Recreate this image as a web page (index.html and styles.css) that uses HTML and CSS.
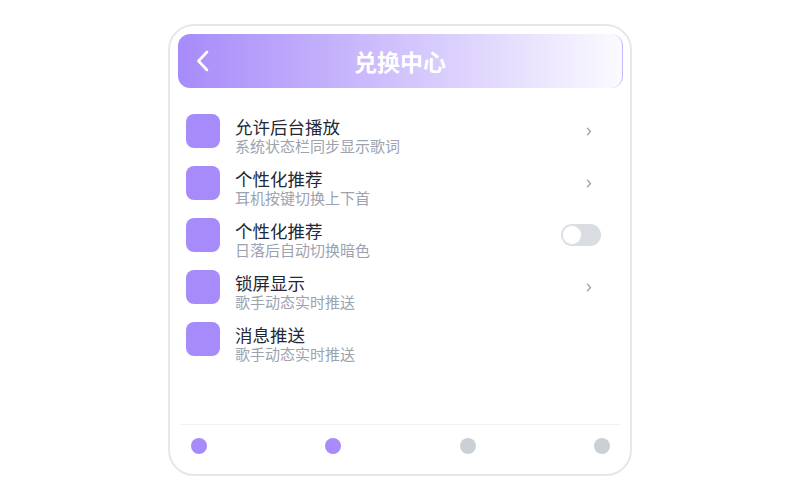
FILE: index.html
```html
<!DOCTYPE html>
<html>

<head>
    <title>兑换中心</title>
    <link rel="stylesheet" href="styles.css">
</head>

<body>
    <div class="phone">
        <header class="topbar">
            <span class="back">
                <svg width="14" height="22" viewBox="0 0 14 22">
                    <path d="M11 2 L2.5 11 L11 20" fill="none" stroke="#fff" stroke-width="2.6" stroke-linecap="round" stroke-linejoin="round" />
                </svg>
            </span>
            <h1 class="title">兑换中心</h1>
            <span></span>
        </header>

        <ul class="settings">
            <li class="row">
                <span class="thumb"></span>
                <div class="text">
                    <p class="name">允许后台播放</p>
                    <p class="desc">系统状态栏同步显示歌词</p>
                </div>
                <span class="chev">
                    <svg width="6" height="9" viewBox="0 0 6 9"><path d="M1.5 1.2 L4.5 4.5 L1.5 7.8" fill="none" stroke="#9ca3af" stroke-width="1.3" stroke-linecap="round" /></svg>
                </span>
            </li>
            <li class="row">
                <span class="thumb"></span>
                <div class="text">
                    <p class="name">个性化推荐</p>
                    <p class="desc">耳机按键切换上下首</p>
                </div>
                <span class="chev">
                    <svg width="6" height="9" viewBox="0 0 6 9"><path d="M1.5 1.2 L4.5 4.5 L1.5 7.8" fill="none" stroke="#9ca3af" stroke-width="1.3" stroke-linecap="round" /></svg>
                </span>
            </li>
            <li class="row">
                <span class="thumb"></span>
                <div class="text">
                    <p class="name">个性化推荐</p>
                    <p class="desc">日落后自动切换暗色</p>
                </div>
                <span class="switch"><span class="knob"></span></span>
            </li>
            <li class="row">
                <span class="thumb"></span>
                <div class="text">
                    <p class="name">锁屏显示</p>
                    <p class="desc">歌手动态实时推送</p>
                </div>
                <span class="chev">
                    <svg width="6" height="9" viewBox="0 0 6 9"><path d="M1.5 1.2 L4.5 4.5 L1.5 7.8" fill="none" stroke="#9ca3af" stroke-width="1.3" stroke-linecap="round" /></svg>
                </span>
            </li>
            <li class="row">
                <span class="thumb"></span>
                <div class="text">
                    <p class="name">消息推送</p>
                    <p class="desc">歌手动态实时推送</p>
                </div>
            </li>
        </ul>

        <nav class="tabs">
            <span class="dot on"></span>
            <span class="dot on"></span>
            <span class="dot"></span>
            <span class="dot"></span>
        </nav>
    </div>
</body>

</html>
```

FILE: styles.css
```css
body {
    margin: 0;
    height: 100vh;
    display: flex;
    align-items: center;
    justify-content: center;
    background: #fff;
    font-family: "Noto Sans CJK SC", "Noto Sans", sans-serif;
}

.phone {
    box-sizing: border-box;
    width: 464px;
    height: 452px;
    border: 2px solid #e5e7eb;
    border-radius: 26px;
    padding: 8px 7px 0 8px;
    display: flex;
    flex-direction: column;
}

.topbar {
    box-sizing: border-box;
    height: 54px;
    border-radius: 12px;
    border-right: 1px solid #c4b5fd;
    background: linear-gradient(to right, #a78bfa, #fbfaff);
    display: grid;
    grid-template-columns: 1fr auto 1fr;
    align-items: center;
    padding: 0 18px;
}

.back {
    display: flex;
}

.title {
    margin: 0;
    color: #fff;
    font-size: 23px;
    font-weight: 700;
    line-height: 30px;
}

.settings {
    list-style: none;
    margin: 17px 0 0;
    padding: 0;
    flex: 1;
}

.row {
    box-sizing: border-box;
    height: 52px;
    padding: 9px 22px 9px 8px;
    display: flex;
    align-items: flex-start;
}

.thumb {
    flex: none;
    width: 34px;
    height: 34px;
    border-radius: 8px;
    background: #a78bfa;
}

.text {
    flex: 1;
    margin: 2px 0 0 15px;
}

.text p {
    margin: 0;
}

.name {
    font-size: 17.5px;
    line-height: 21px;
    color: #1f2937;
}

.desc {
    font-size: 15px;
    line-height: 18px;
    color: #9ca3af;
}

.chev {
    align-self: center;
    display: flex;
    margin-right: 9px;
}

.switch {
    align-self: center;
    box-sizing: border-box;
    width: 40px;
    height: 22px;
    border-radius: 11px;
    background: #d9dce2;
    padding: 2px;
    display: flex;
}

.knob {
    box-sizing: border-box;
    width: 18px;
    height: 18px;
    border-radius: 50%;
    background: #fff;
    box-shadow: 0 0 0 1px #e3e5ea;
}

.tabs {
    margin: 0 2px;
    border-top: 1px solid #f0f1f3;
    padding: 13px 11px 20px;
    display: flex;
    justify-content: space-between;
}

.dot {
    width: 16px;
    height: 16px;
    border-radius: 50%;
    background: #cbcfd6;
}

.dot.on {
    background: #a78bfa;
}
```
